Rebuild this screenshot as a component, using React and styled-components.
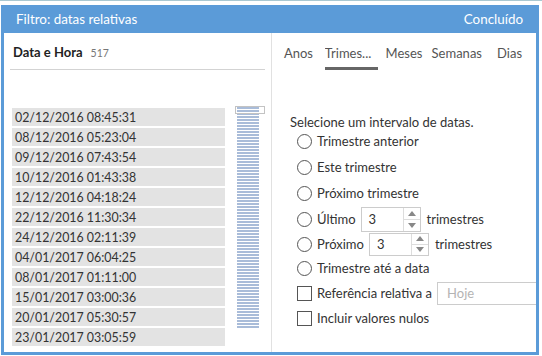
import React from 'react'
import styled, { createGlobalStyle } from 'styled-components'

const GlobalStyle = createGlobalStyle`
  html, body {
    margin: 0;
    padding: 0;
    background: #ffffff;
  }
  body {
    font-family: Lato, "Open Sans", sans-serif;
    color: #333333;
  }
`

const dates = [
  '02/12/2016 08:45:31',
  '08/12/2016 05:23:04',
  '09/12/2016 07:43:54',
  '10/12/2016 01:43:38',
  '12/12/2016 04:18:24',
  '22/12/2016 11:30:34',
  '24/12/2016 02:11:39',
  '04/01/2017 06:04:25',
  '08/01/2017 01:11:00',
  '15/01/2017 03:00:36',
  '20/01/2017 05:30:57',
  '23/01/2017 03:05:59',
]

const tabs = ['Anos', 'Trimestres', 'Meses', 'Semanas', 'Dias']

const Page = styled.div`
  width: 542px;
  height: 356px;
  box-sizing: border-box;
  border-top: 1px solid #a9c8d2;
  padding: 4px 3px 1px 1px;
`

const Dialog = styled.div`
  height: 100%;
  box-sizing: border-box;
  border: 3px solid #5b9bd8;
  border-top: none;
  display: flex;
  flex-direction: column;
  overflow: hidden;
`

const Header = styled.div`
  height: 28px;
  flex: none;
  background: #5b9bd8;
  margin: 0 -3px;
  padding: 0 16px 0 15px;
  display: flex;
  align-items: center;
  justify-content: space-between;
  color: #ffffff;
  font-size: 13.4px;
`

const Body = styled.div`
  flex: 1;
  display: flex;
  min-height: 0;
`

const LeftPane = styled.div`
  width: 267px;
  flex: none;
  border-right: 1px solid #e1e1e1;
  display: flex;
  flex-direction: column;
`

const FieldHead = styled.div`
  margin: 0 6px;
  padding: 10px 0 0 3px;
  height: 26px;
  border-bottom: 1px solid #d3d3d3;
  display: flex;
  align-items: baseline;
  gap: 8px;
`

const FieldName = styled.span`
  font-size: 13px;
  font-weight: bold;
  color: #222222;
  line-height: 18px;
`

const FieldCount = styled.span`
  font-size: 10.5px;
  color: #777777;
`

const ListArea = styled.div`
  display: flex;
  gap: 10px;
  padding: 38px 0 0 8px;
`

const List = styled.div`
  width: 213px;
  display: flex;
  flex-direction: column;
  gap: 2px;
`

const Item = styled.div`
  height: 18px;
  background: #e3e3e3;
  padding-left: 3px;
  font-size: 12.4px;
  line-height: 19px;
  color: #333333;
`

const Track = styled.div`
  position: relative;
  width: 30px;
`

const Stripes = styled.div`
  margin: -1px 0 0 2px;
  width: 22px;
  height: 222px;
  background: repeating-linear-gradient(
    to bottom,
    #a9bcd9 0px,
    #a9bcd9 2px,
    #ffffff 2px,
    #ffffff 3px
  );
`

const Thumb = styled.div`
  position: absolute;
  left: 0;
  top: -2px;
  width: 28px;
  height: 6px;
  border: 1px solid #c3c3c3;
`

const RightPane = styled.div`
  flex: 1;
  min-width: 0;
  display: flex;
  flex-direction: column;
`

const Tabs = styled.div`
  display: flex;
  padding-top: 12px;
`

const Tab = styled.div`
  flex: 1;
  min-width: 0;
  text-align: ${(p) => (p.active ? 'left' : 'center')};
  font-size: 13px;
  line-height: 16px;
  color: #555555;
  white-space: nowrap;
  overflow: hidden;
  text-overflow: ellipsis;
  padding-bottom: 6px;
  border-bottom: 3px solid ${(p) => (p.active ? '#666666' : 'transparent')};
`

const Options = styled.div`
  padding: 44px 0 0 18px;
  font-size: 13px;
  color: #333333;
`

const Prompt = styled.div`
  line-height: 16px;
  margin-bottom: -2px;
`

const Row = styled.div`
  height: ${(p) => p.h}px;
  display: flex;
  align-items: center;
  padding-left: 7px;
  white-space: nowrap;
`

const Radio = styled.span`
  width: 13px;
  height: 13px;
  border: 1px solid #555555;
  border-radius: 50%;
  margin-right: 5px;
  flex: none;
`

const Check = styled.span`
  width: 13px;
  height: 13px;
  border: 1px solid #555555;
  margin-right: 5px;
  flex: none;
`

const Spin = styled.div`
  width: 60px;
  height: ${(p) => p.h}px;
  box-sizing: border-box;
  border: 1px solid #cccccc;
  margin: 0 6px 0 ${(p) => p.ml}px;
  display: flex;
`

const SpinValue = styled.div`
  flex: 1;
  padding-left: 7px;
  display: flex;
  align-items: center;
  color: #333333;
`

const SpinButtons = styled.div`
  width: 16px;
  border-left: 1px solid #dddddd;
  display: flex;
  flex-direction: column;
`

const Arrow = styled.div`
  flex: 1;
  display: flex;
  align-items: center;
  justify-content: center;
  & + & {
    border-top: 1px solid #dddddd;
  }
  &::before {
    content: '';
    border-left: 4px solid transparent;
    border-right: 4px solid transparent;
    ${(p) => (p.up ? 'border-bottom: 5px solid #888888;' : 'border-top: 5px solid #888888;')}
  }
`

const TextBox = styled.div`
  width: 100px;
  height: 23px;
  flex: none;
  box-sizing: border-box;
  border: 1px solid #cccccc;
  margin-left: 5px;
  padding-left: 9px;
  display: flex;
  align-items: center;
  color: #b4b4b4;
`

function Spinner({ h, ml }) {
  return (
    <Spin h={h} ml={ml}>
      <SpinValue>3</SpinValue>
      <SpinButtons>
        <Arrow up />
        <Arrow />
      </SpinButtons>
    </Spin>
  )
}

export default function App() {
  return (
    <Page>
      <GlobalStyle />
      <Dialog>
        <Header>
          <span>Filtro: datas relativas</span>
          <span>Concluído</span>
        </Header>
        <Body>
          <LeftPane>
            <FieldHead>
              <FieldName>Data e Hora</FieldName>
              <FieldCount>517</FieldCount>
            </FieldHead>
            <ListArea>
              <List>
                {dates.map((d) => (
                  <Item key={d}>{d}</Item>
                ))}
              </List>
              <Track>
                <Stripes />
                <Thumb />
              </Track>
            </ListArea>
          </LeftPane>
          <RightPane>
            <Tabs>
              {tabs.map((t) => (
                <Tab key={t} active={t === 'Trimestres'}>
                  {t === 'Trimestres' ? 'Trimes...' : t}
                </Tab>
              ))}
            </Tabs>
            <Options>
              <Prompt>Selecione um intervalo de datas.</Prompt>
              <Row h={26}><Radio />Trimestre anterior</Row>
              <Row h={26}><Radio />Este trimestre</Row>
              <Row h={26}><Radio />Próximo trimestre</Row>
              <Row h={26}><Radio />Último<Spinner h={25} ml={5} />trimestres</Row>
              <Row h={24}><Radio />Próximo<Spinner h={23} ml={5} />trimestres</Row>
              <Row h={24}><Radio />Trimestre até a data</Row>
              <Row h={26}><Check />Referência relativa a<TextBox>Hoje</TextBox></Row>
              <Row h={24}><Check />Incluir valores nulos</Row>
            </Options>
          </RightPane>
        </Body>
      </Dialog>
    </Page>
  )
}
